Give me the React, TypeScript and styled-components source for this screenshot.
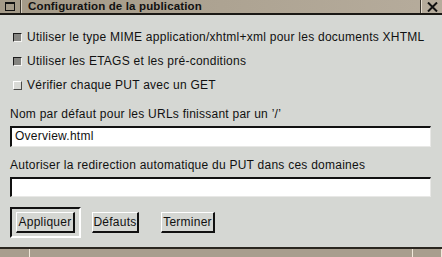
import * as React from 'react'
import styled, { createGlobalStyle } from 'styled-components'

const GlobalStyle = createGlobalStyle`
    html, body {
        margin: 0;
        padding: 0;
        background: #d5d7d3;
        overflow: hidden;
    }
    body {
        font-family: "Liberation Sans", Arial, sans-serif;
    }
`

const Window = styled.div`
    width: 442px;
    height: 257px;
    display: flex;
    flex-direction: column;
    background: #d5d7d3;
    color: #111;
`

const TitleBar = styled.div`
    height: 13px;
    display: flex;
    align-items: stretch;
    background: linear-gradient(to right, #a49a88, #b6ac9c);
    border-bottom: 2px solid #1a1814;
`

const TitleIcon = styled.div`
    width: 20px;
    display: flex;
    align-items: center;
    justify-content: center;
    border-right: 1px solid #3a352d;
    box-shadow: 1px 0 0 #d8d0c2;
`

const IconBox = styled.div`
    width: 8px;
    height: 6px;
    border: 1px solid #111;
    border-top-width: 2px;
`

const TitleText = styled.div`
    flex: 1;
    padding-left: 7px;
    font-size: 11.5px;
    letter-spacing: 0.15px;
    font-weight: bold;
    line-height: 13px;
    color: #111;
`

const CloseButton = styled.div`
    width: 20px;
    display: flex;
    align-items: center;
    justify-content: center;
    border-left: 1px solid #e4dccf;
    box-shadow: -1px 0 0 #3a352d;
`

const Content = styled.div`
    flex: 1;
    display: flex;
    flex-direction: column;
    padding: 10px 10px 0 10px;
    letter-spacing: 0.25px;
`

const CheckRow = styled.label`
    height: 24px;
    display: flex;
    align-items: center;
    padding-left: 3px;
    font-size: 12px;
`

const Box = styled.span<{ $sunken: boolean }>`
    width: 7px;
    height: 7px;
    margin-right: 5px;
    background: ${p => (p.$sunken ? '#858581' : '#d9dad6')};
    border-style: solid;
    border-width: 1px;
    border-color: ${p =>
        p.$sunken ? '#1c1c1c #f4f4f2 #f4f4f2 #1c1c1c' : '#ffffff #4a4a48 #4a4a48 #ffffff'};
`

const FieldLabel = styled.div<{ $top: number }>`
    margin-top: ${p => p.$top}px;
    height: 14px;
    line-height: 14px;
    font-size: 12px;
`

const TextField = styled.div<{ $height: number }>`
    margin-top: 5px;
    width: 421px;
    height: ${p => p.$height}px;
    box-sizing: border-box;
    background: #fff;
    border-style: solid;
    border-width: 2px 1px 1px 2px;
    border-color: #111 #e8e8e6 #e8e8e6 #111;
    font-size: 12px;
    line-height: 17px;
    padding-left: 3px;
`

const ButtonRow = styled.div`
    margin-top: 10px;
    display: flex;
    align-items: center;
`

const DefaultFrame = styled.div`
    width: 71px;
    height: 31px;
    box-sizing: border-box;
    display: flex;
    align-items: center;
    justify-content: center;
    border-style: solid;
    border-width: 2px;
    border-color: #111 #fff #fff #111;
    margin-right: 11px;
`

const Button = styled.div<{ $width: number; $gap?: number }>`
    width: ${p => p.$width}px;
    height: 21px;
    box-sizing: border-box;
    margin-right: ${p => p.$gap ?? 0}px;
    display: flex;
    align-items: center;
    justify-content: center;
    border-style: solid;
    border-width: 1px 2px 2px 1px;
    border-color: #fff #111 #111 #fff;
    font-size: 12px;
    background: #d5d7d3;
`

const BottomBar = styled.div`
    height: 8px;
    display: flex;
    border-top: 2px solid #2a261f;
    background: #a89e8e;
`

const BottomCell = styled.div<{ $width?: number }>`
    width: ${p => (p.$width ? `${p.$width}px` : 'auto')};
    flex: ${p => (p.$width ? 'none' : 1)};
    border-right: 1px solid #f0e8da;
`

const options = [
    { text: 'Utiliser le type MIME application/xhtml+xml pour les documents XHTML', on: true },
    { text: 'Utiliser les ETAGS et les pré-conditions', on: true },
    { text: 'Vérifier chaque PUT avec un GET', on: false },
]

export default function App() {
    return (
        <Window>
            <GlobalStyle />
            <TitleBar>
                <TitleIcon>
                    <IconBox />
                </TitleIcon>
                <TitleText>Configuration de la publication</TitleText>
                <CloseButton>
                    <svg width="11" height="10" viewBox="0 0 11 10">
                        <path d="M1 0.5 L10 9.5 M10 0.5 L1 9.5" stroke="#111" strokeWidth="2" />
                    </svg>
                </CloseButton>
            </TitleBar>
            <Content>
                {options.map(o => (
                    <CheckRow key={o.text}>
                        <Box $sunken={o.on} />
                        {o.text}
                    </CheckRow>
                ))}
                <FieldLabel $top={10}>Nom par défaut pour les URLs finissant par un ’/’</FieldLabel>
                <TextField $height={21}>Overview.html</TextField>
                <FieldLabel $top={11}>Autoriser la redirection automatique du PUT dans ces domaines</FieldLabel>
                <TextField $height={20} />
                <ButtonRow>
                    <DefaultFrame>
                        <Button $width={59}>Appliquer</Button>
                    </DefaultFrame>
                    <Button $width={47} $gap={22}>Défauts</Button>
                    <Button $width={54}>Terminer</Button>
                </ButtonRow>
            </Content>
            <BottomBar>
                <BottomCell $width={29} />
                <BottomCell />
                <BottomCell $width={28} />
            </BottomBar>
        </Window>
    )
}
